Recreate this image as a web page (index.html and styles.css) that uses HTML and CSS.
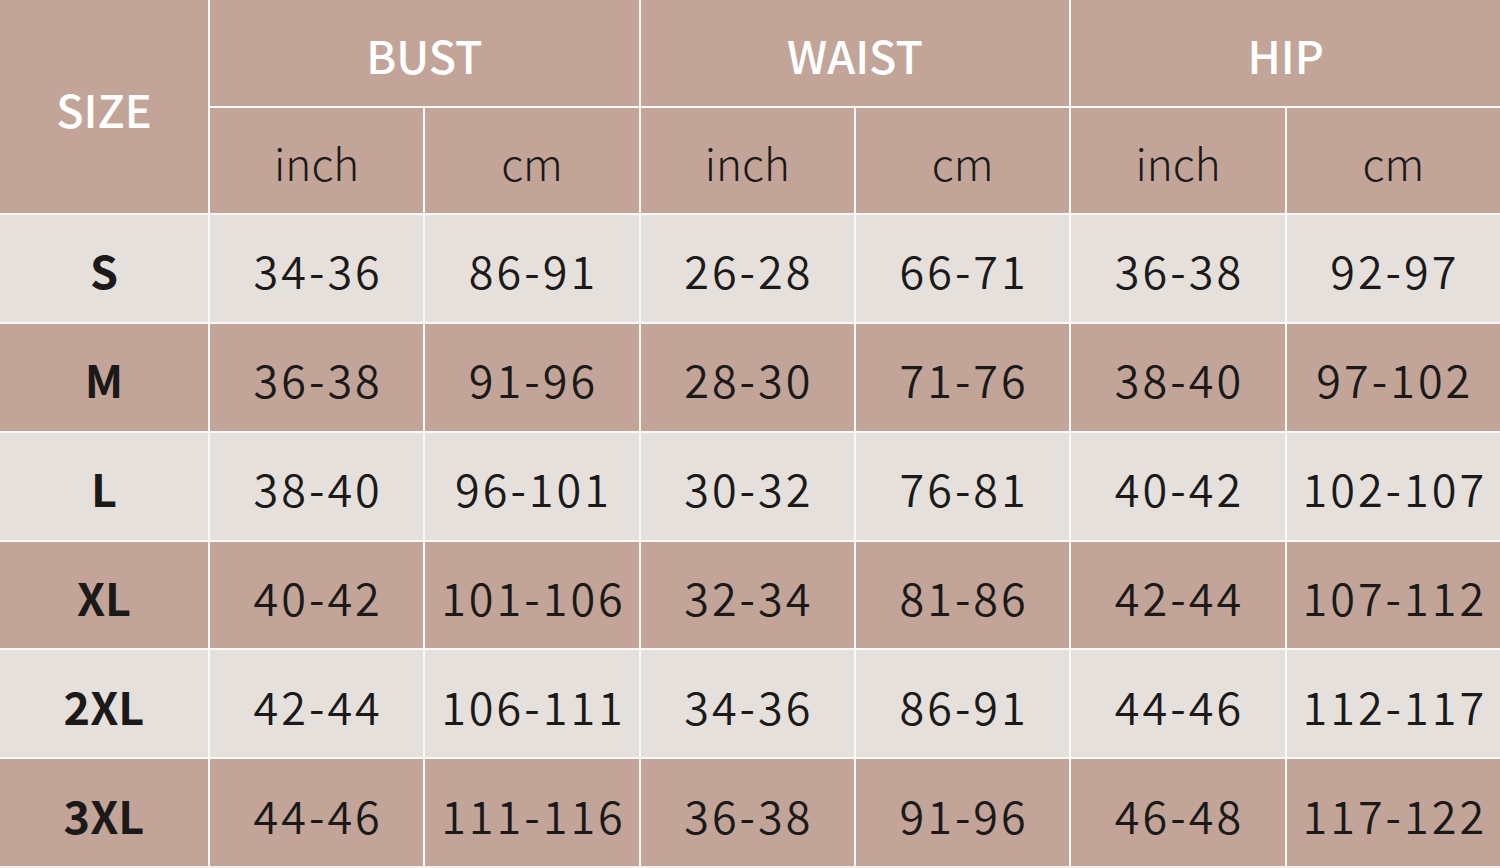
FILE: index.html
```html
<!DOCTYPE html>
<html lang="en">
<head>
<meta charset="utf-8">
<title>Size Chart</title>
<link rel="stylesheet" href="styles.css">
</head>
<body>
<div class="chart">
  <div class="cell head size-head">SIZE</div>
  <div class="cell head group">BUST</div>
  <div class="cell head group">WAIST</div>
  <div class="cell head group">HIP</div>
  <div class="cell unit">inch</div><div class="cell unit">cm</div>
  <div class="cell unit">inch</div><div class="cell unit">cm</div>
  <div class="cell unit">inch</div><div class="cell unit">cm</div>

  <div class="cell light label">S</div>
  <div class="cell light">34-36</div><div class="cell light">86-91</div>
  <div class="cell light">26-28</div><div class="cell light">66-71</div>
  <div class="cell light">36-38</div><div class="cell light">92-97</div>

  <div class="cell label">M</div>
  <div class="cell">36-38</div><div class="cell">91-96</div>
  <div class="cell">28-30</div><div class="cell">71-76</div>
  <div class="cell">38-40</div><div class="cell">97-102</div>

  <div class="cell light label">L</div>
  <div class="cell light">38-40</div><div class="cell light">96-101</div>
  <div class="cell light">30-32</div><div class="cell light">76-81</div>
  <div class="cell light">40-42</div><div class="cell light">102-107</div>

  <div class="cell label">XL</div>
  <div class="cell">40-42</div><div class="cell">101-106</div>
  <div class="cell">32-34</div><div class="cell">81-86</div>
  <div class="cell">42-44</div><div class="cell">107-112</div>

  <div class="cell light label">2XL</div>
  <div class="cell light">42-44</div><div class="cell light">106-111</div>
  <div class="cell light">34-36</div><div class="cell light">86-91</div>
  <div class="cell light">44-46</div><div class="cell light">112-117</div>

  <div class="cell label">3XL</div>
  <div class="cell">44-46</div><div class="cell">111-116</div>
  <div class="cell">36-38</div><div class="cell">91-96</div>
  <div class="cell">46-48</div><div class="cell">117-122</div>
</div>
</body>
</html>
```

FILE: styles.css
```css
html, body {
  margin: 0;
  padding: 0;
  background: #f4f1ef;
}

.chart {
  display: grid;
  grid-template-columns: 208px repeat(6, 1fr);
  grid-template-rows: 106px 105px repeat(6, 1fr);
  gap: 2px;
  width: 1500px;
  height: 866px;
  background: #fbf9f8;
  font-family: "Noto Sans CJK SC", "Noto Sans", sans-serif;
  color: #1c1a19;
}

.cell {
  display: flex;
  align-items: center;
  justify-content: center;
  background: #c2a598;
  font-size: 45px;
  font-weight: 350;
  letter-spacing: 3px;
  text-indent: 3px;
  line-height: 1;
  padding-top: 3px;
}

.light {
  background: #e6e0dc;
}

.head {
  color: #ffffff;
  font-weight: 500;
  letter-spacing: 0;
  text-indent: 0;
}

.size-head {
  grid-row: 1 / span 2;
}

.group {
  grid-column: span 2;
}

.unit {
  font-size: 44px;
  font-weight: 300;
  letter-spacing: 0;
  text-indent: 0;
}

.label {
  font-weight: 700;
  letter-spacing: 0;
  text-indent: 0;
}
```
